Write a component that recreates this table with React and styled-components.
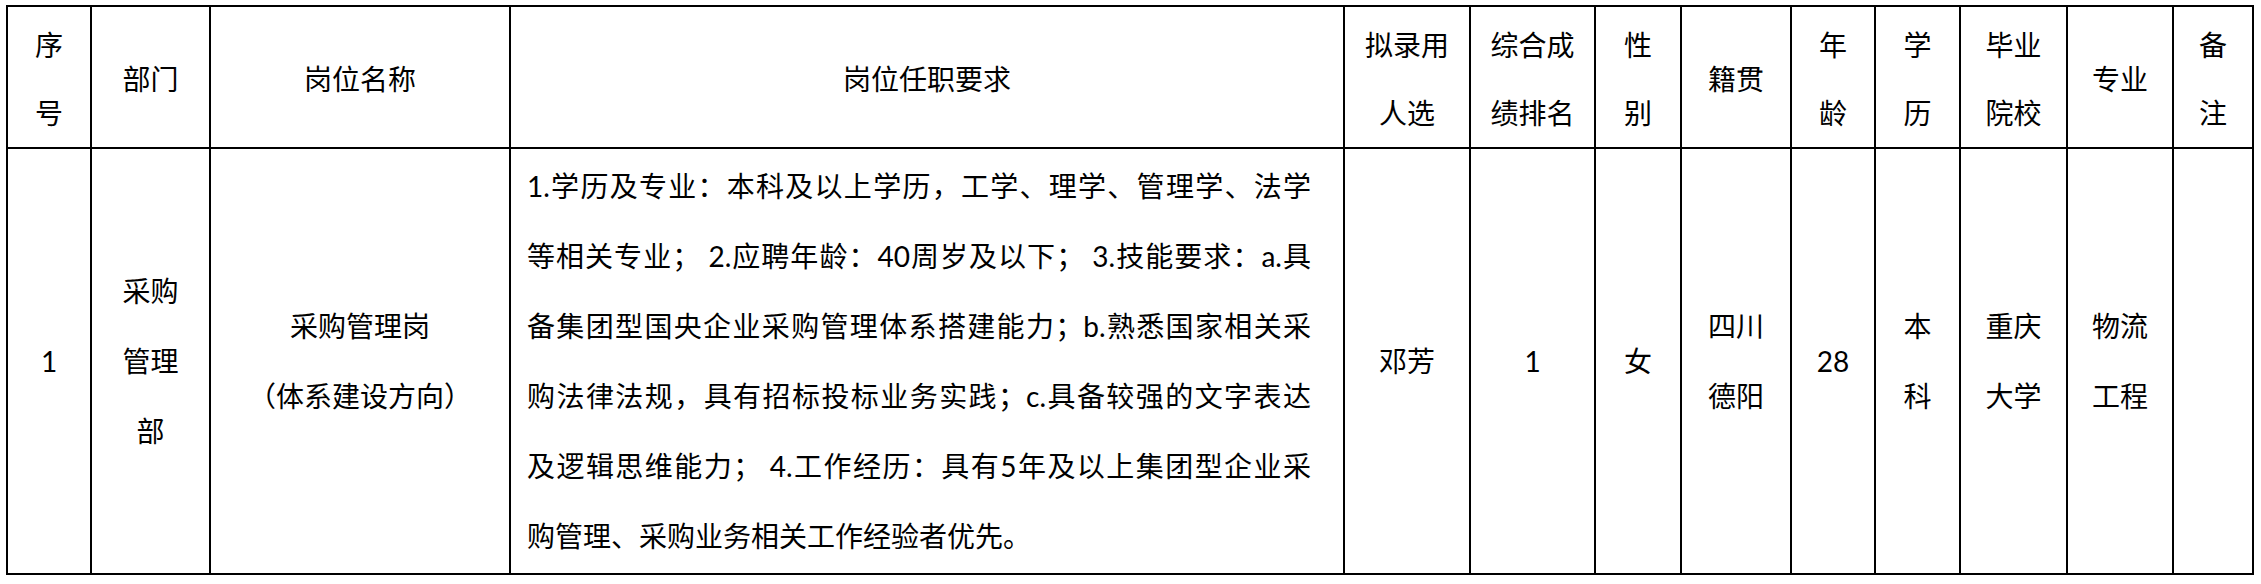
import React from "react";
import styled, { createGlobalStyle } from "styled-components";

const GlobalStyle = createGlobalStyle`
  html, body {
    margin: 0;
    padding: 0;
    background: #ffffff;
  }
  body {
    font-family: "Lato", "Noto Sans CJK SC", sans-serif;
    color: #000000;
  }
`;

const COLUMN_WIDTHS = [84, 119, 300, 834, 126, 125, 86, 110, 84, 85, 107, 106, 80];

const Table = styled.div`
  display: grid;
  grid-template-columns: ${COLUMN_WIDTHS.map((w) => `${w}px`).join(" ")};
  grid-template-rows: 142px 426px;
  width: max-content;
  margin: 5px 0 0 6px;
  border-top: 2px solid #000;
  border-left: 2px solid #000;
  font-family: "Lato", "Noto Sans CJK SC", sans-serif;
  font-size: 28px;
  color: #000;
`;

const Cell = styled.div`
  box-sizing: border-box;
  border-right: 2px solid #000;
  border-bottom: 2px solid #000;
  display: flex;
  flex-direction: column;
  justify-content: center;
  align-items: center;
  text-align: center;
  padding-top: ${(p) => (p.$head ? "4px" : "0")};
  line-height: ${(p) => (p.$head ? "68px" : "70px")};
  overflow: hidden;
`;

const TextCell = styled(Cell)`
  align-items: stretch;
  text-align: left;
  padding: 0 32px 0 16px;
`;

const Line = styled.span`
  display: block;
  white-space: nowrap;
`;

const JustLine = styled.span`
  display: block;
  text-align: ${(p) => (p.$last ? "left" : "justify")};
  text-align-last: ${(p) => (p.$last ? "left" : "justify")};
`;

const header = [
  ["序", "号"],
  ["部门"],
  ["岗位名称"],
  ["岗位任职要求"],
  ["拟录用", "人选"],
  ["综合成", "绩排名"],
  ["性", "别"],
  ["籍贯"],
  ["年", "龄"],
  ["学", "历"],
  ["毕业", "院校"],
  ["专业"],
  ["备", "注"],
];

const requirement = [
  "1.学历及专业：本科及以上学历，工学、理学、管理学、法学",
  "等相关专业； 2.应聘年龄：40周岁及以下； 3.技能要求：a.具",
  "备集团型国央企业采购管理体系搭建能力；b.熟悉国家相关采",
  "购法律法规，具有招标投标业务实践；c.具备较强的文字表达",
  "及逻辑思维能力； 4.工作经历：具有5年及以上集团型企业采",
  "购管理、采购业务相关工作经验者优先。",
];

const row = [
  ["1"],
  ["采购", "管理", "部"],
  ["采购管理岗", "（体系建设方向）"],
  null,
  ["邓芳"],
  ["1"],
  ["女"],
  ["四川", "德阳"],
  ["28"],
  ["本", "科"],
  ["重庆", "大学"],
  ["物流", "工程"],
  [],
];

export default function App() {
  return (
    <>
      <GlobalStyle />
      <Table>
        {header.map((lines, i) => (
          <Cell key={`h${i}`} $head>
            {lines.map((t, j) => (
              <Line key={j}>{t}</Line>
            ))}
          </Cell>
        ))}
        {row.map((lines, i) =>
          lines === null ? (
            <TextCell key={`b${i}`}>
              {requirement.map((t, j) => (
                <JustLine key={j} $last={j === requirement.length - 1}>
                  {t}
                </JustLine>
              ))}
            </TextCell>
          ) : (
            <Cell key={`b${i}`}>
              {lines.map((t, j) => (
                <Line key={j}>{t}</Line>
              ))}
            </Cell>
          )
        )}
      </Table>
    </>
  );
}
